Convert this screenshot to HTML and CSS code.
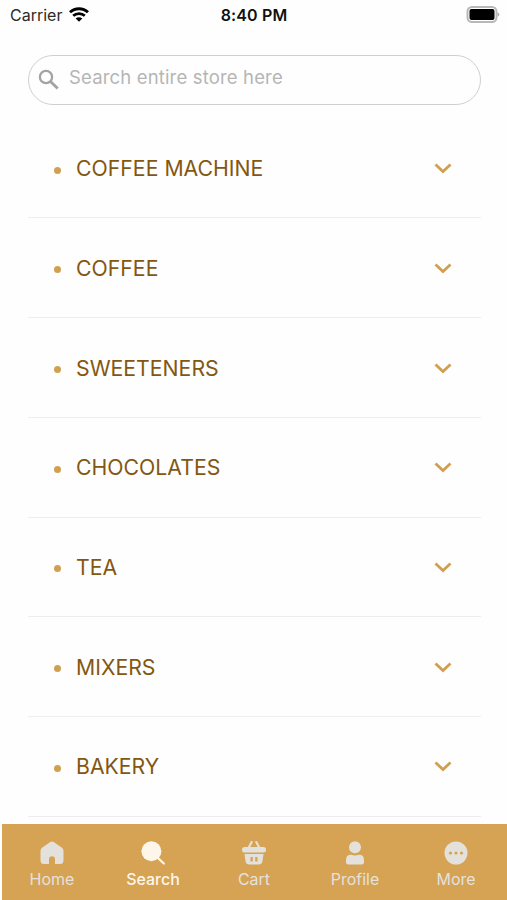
FILE: index.html
```
<!DOCTYPE html>
<html lang="en">

<head>
    <meta charset="UTF-8">
    <meta name="viewport" content="width=device-width, initial-scale=1.0">
    <title>Search</title>
    <link rel="stylesheet" href="styles.css">
</head>

<body>
    <svg class="sprite">
        <symbol id="chevron" viewBox="0 0 18 12">
            <path d="M1.5 2.5L9 9.5L16.5 2.5" fill="none" stroke="currentColor" stroke-width="2.8" />
        </symbol>
    </svg>

    <header class="status">
        <div class="carrier">
            <span>Carrier</span>
            <svg class="wifi" width="20" height="15" viewBox="0 0 20 15">
                <path d="M1 5.3C6 .6 14 .6 19 5.3" fill="none" stroke="#000" stroke-width="2.9" />
                <path d="M4.2 8.8C7.4 5.8 12.6 5.8 15.8 8.8" fill="none" stroke="#000" stroke-width="2.7" />
                <path d="M6.7 11.4C8.5 9.7 11.5 9.7 13.3 11.4L10 14.8z" />
            </svg>
        </div>
        <div class="time">8:40 PM</div>
        <svg class="battery" width="34" height="17" viewBox="0 0 34 17">
            <rect x="1.5" y="1" width="29" height="15" rx="4.5" fill="#fff" stroke="#b8b8b8" stroke-width="2" />
            <rect x="3.5" y="3" width="25" height="11" rx="2" />
            <path d="M31.5 6.5C34 7 34 10 31.5 10.5z" fill="#b0b0b0" />
        </svg>
    </header>

    <div class="search">
        <svg width="22" height="22" viewBox="0 0 22 22" fill="none" stroke="#a3a3a3">
            <circle cx="8" cy="8" r="6.1" stroke-width="2.3" />
            <path d="M12.5 12.5L19.7 19.5" stroke-width="2.9" />
        </svg>
        <input type="text" placeholder="Search entire store here">
    </div>

    <ul class="categories">
        <li><span class="dot"></span><span class="name">COFFEE MACHINE</span><svg class="arrow"><use href="#chevron" /></svg></li>
        <li><span class="dot"></span><span class="name">COFFEE</span><svg class="arrow"><use href="#chevron" /></svg></li>
        <li><span class="dot"></span><span class="name">SWEETENERS</span><svg class="arrow"><use href="#chevron" /></svg></li>
        <li><span class="dot"></span><span class="name">CHOCOLATES</span><svg class="arrow"><use href="#chevron" /></svg></li>
        <li><span class="dot"></span><span class="name">TEA</span><svg class="arrow"><use href="#chevron" /></svg></li>
        <li><span class="dot"></span><span class="name">MIXERS</span><svg class="arrow"><use href="#chevron" /></svg></li>
        <li><span class="dot"></span><span class="name">BAKERY</span><svg class="arrow"><use href="#chevron" /></svg></li>
    </ul>

    <nav class="tabs">
        <a class="tab">
            <svg viewBox="0 0 24 24">
                <path d="M10.3 1Q12 -.2 13.7 1L22 6.8Q23.5 8 23.5 10V19.5Q23.5 23 20 23H15V18.3Q15 15.3 12 15.3Q9 15.3 9 18.3V23H4Q.5 23 .5 19.5V10Q.5 8 2 6.8z" />
            </svg>
            <span>Home</span>
        </a>
        <a class="tab active">
            <svg viewBox="0 0 24 24">
                <circle cx="10.4" cy="10.2" r="10" />
                <path d="M17 17L22.8 22.5" stroke="currentColor" stroke-width="2.2" stroke-linecap="round" />
            </svg>
            <span>Search</span>
        </a>
        <a class="tab">
            <svg viewBox="0 0 24 24">
                <path d="M6.5 7L9.7 1M17.5 7L14.3 1" stroke="currentColor" stroke-width="2.2" stroke-linecap="round" />
                <rect x="0" y="6" width="24" height="5.6" rx="2.5" />
                <path fill-rule="evenodd" d="M2.5 13H21.5L20.5 20Q20 23.5 16.5 23.5H7.5Q4 23.5 3.5 20zM8.5 16V20.5H10.8V16zM13.2 16V20.5H15.5V16z" />
            </svg>
            <span>Cart</span>
        </a>
        <a class="tab">
            <svg viewBox="0 0 24 24">
                <circle cx="12" cy="6.3" r="6" />
                <path d="M3 21V19Q3 13.8 8 13.8Q12 15.3 16 13.8Q21 13.8 21 19V21Q21 23.5 18.5 23.5H5.5Q3 23.5 3 21z" />
            </svg>
            <span>Profile</span>
        </a>
        <a class="tab">
            <svg viewBox="0 0 24 24">
                <circle cx="12" cy="12" r="11.5" />
                <g fill="#d5a353">
                    <circle cx="6.5" cy="12" r="1.6" />
                    <circle cx="12" cy="12" r="1.6" />
                    <circle cx="17.5" cy="12" r="1.6" />
                </g>
            </svg>
            <span>More</span>
        </a>
    </nav>
</body>

</html>
```

FILE: styles.css
```
* {
    box-sizing: border-box;
    font-family: "Inter", sans-serif;
}

body {
    display: flex;
    flex-direction: column;
    height: 900px;
    margin: 0;
    overflow: hidden;
    background-color: #fefefe;
}

.sprite {
    display: none;
}

.status {
    display: grid;
    grid-template-columns: 1fr auto 1fr;
    align-items: center;
    height: 30px;
    flex-shrink: 0;
    padding: 0 7px 0 10px;
    font-size: 16px;
    color: #2b2b2b;
}

.carrier {
    display: flex;
    align-items: center;
    gap: 7px;
}

.wifi {
    margin-bottom: 1px;
}

.time {
    margin-right: 2px;
    font-weight: 600;
    letter-spacing: 0.15px;
    color: #111;
}

.battery {
    justify-self: end;
    margin-bottom: 2px;
}

.search {
    display: flex;
    align-items: center;
    flex-shrink: 0;
    height: 50px;
    margin: 25px 26px 0 28px;
    padding: 0 9px;
    border: 1px solid #cfcfcf;
    border-radius: 25px;
}

.search input {
    flex: 1;
    margin-left: 9px;
    padding: 0 0 7px;
    border: none;
    outline: none;
    background: none;
    font-size: 18.5px;
    letter-spacing: 0.16px;
}

.search input::placeholder {
    color: #b5b5b5;
}

.categories {
    flex: 1;
    min-height: 0;
    overflow: hidden;
    margin: 13.8px 26px 0 28px;
    padding: 0;
    list-style: none;
}

.categories li {
    display: flex;
    align-items: center;
    height: 99.7px;
    padding: 0 29px 0 26px;
    border-bottom: 1px solid #eee;
}

.dot {
    width: 7px;
    height: 7px;
    margin-top: 4px;
    border-radius: 50%;
    background-color: #d0a050;
}

.name {
    flex: 1;
    margin-left: 15px;
    font-size: 21.25px;
    color: #835712;
}

.arrow {
    width: 18px;
    height: 12px;
    color: #d0a050;
}

.tabs {
    display: grid;
    grid-template-columns: repeat(5, 101px);
    flex-shrink: 0;
    height: 76px;
    margin-left: 2px;
    padding-top: 17px;
    background-color: #d5a353;
}

.tab {
    display: flex;
    flex-direction: column;
    align-items: center;
    gap: 4px;
    padding-right: 1px;
    font-size: 16px;
    line-height: 20px;
    color: #e4e1dc;
}

.tab svg {
    width: 24px;
    height: 24px;
    fill: currentColor;
}

.active {
    font-weight: 500;
    color: #fff6ea;
}
```
